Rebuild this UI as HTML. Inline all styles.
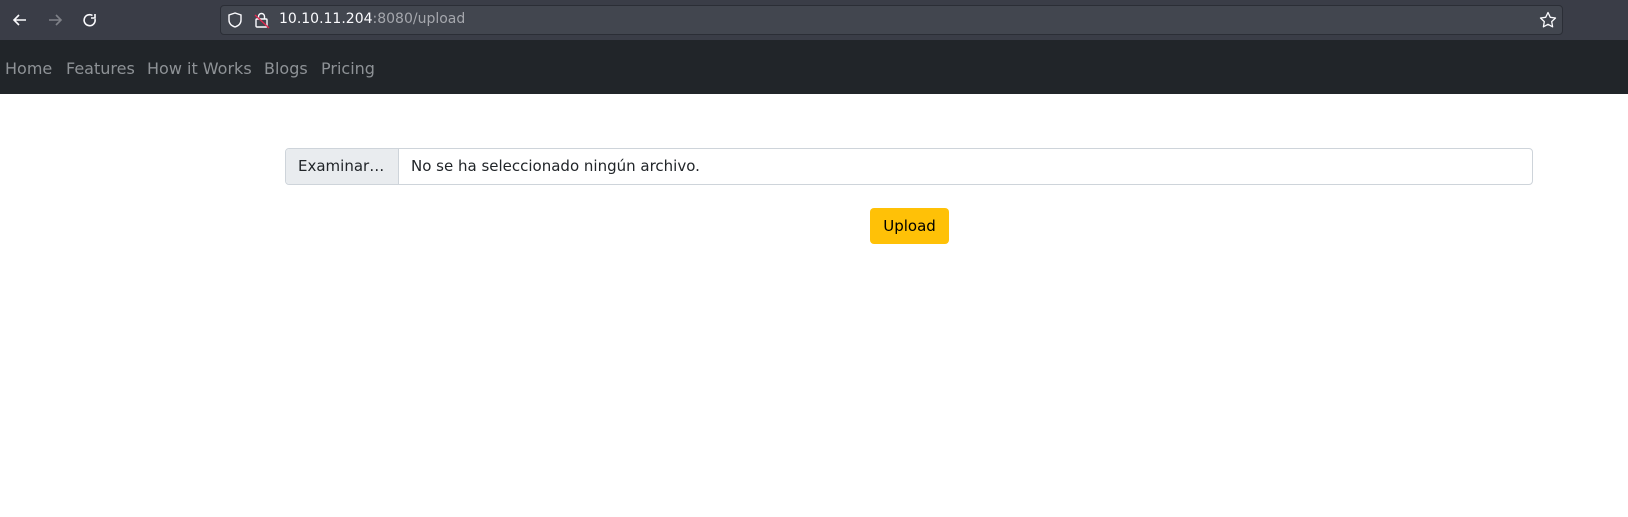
<!DOCTYPE html>
<html><head><meta charset="utf-8"><style>
*{margin:0;padding:0;box-sizing:border-box}
body{width:1628px;height:517px;background:#fff;font-family:"DejaVu Sans","Liberation Sans",sans-serif;overflow:hidden;position:relative}
.tb{position:absolute;left:0;top:0;width:1628px;height:40px;background:#3a3d47}
.url{position:absolute;left:220px;top:5px;width:1343px;height:30px;background:#42464f;border:1px solid #2b2e36;border-radius:4px}
.urltext{position:absolute;left:279px;top:11px;font-size:14px;color:#fbfbfe}
.urltext span{color:#a5a7ad}
.nav{position:absolute;left:0;top:40px;width:1628px;height:54px;background:#212529}
.nav a{position:absolute;top:19px;font-size:16px;color:#8e9296;text-decoration:none}
.file{position:absolute;left:285px;top:148px;width:1248px;height:37px;border:1px solid #ced4da;border-radius:4px;overflow:hidden}
.btnf{position:absolute;left:0;top:0;width:113px;height:35px;background:#e9ecef;border-right:1px solid #ced4da;font-size:15px;color:#212529;line-height:35px;padding-left:12px}
.ft{position:absolute;left:125px;top:0;line-height:35px;font-size:15px;color:#212529}
.up{position:absolute;left:870px;top:208px;width:79px;height:36px;background:#ffc107;border-radius:4px;font-size:15px;line-height:36px;text-align:center;color:#000}
svg{position:absolute}
</style></head><body>
<div class="tb"></div>
<svg style="left:11px;top:11px" width="18" height="18" viewBox="0 0 18 18"><path d="M15 9H3M8 4L3 9l5 5" stroke="#fbfbfe" stroke-width="1.6" fill="none"/></svg>
<svg style="left:46px;top:11px" width="18" height="18" viewBox="0 0 18 18"><path d="M3 9h12M10 4l5 5-5 5" stroke="#7f8188" stroke-width="1.6" fill="none"/></svg>
<svg style="left:81px;top:11px" width="18" height="18" viewBox="0 0 18 18"><path d="M14 8A5.5 5.5 0 1 1 11.5 4.5M14 3v4h-4" stroke="#fbfbfe" stroke-width="1.6" fill="none"/></svg>
<div class="url"></div>
<svg style="left:227px;top:11px" width="16" height="18" viewBox="0 0 16 18"><path d="M8 2L2 4v5c0 4 3 6 6 7 3-1 6-3 6-7V4z" stroke="#fbfbfe" stroke-width="1.4" fill="none"/></svg>
<svg style="left:254px;top:11px" width="16" height="18" viewBox="0 0 16 18"><rect x="2" y="8" width="11" height="8" rx="1" stroke="#fbfbfe" stroke-width="1.4" fill="none"/><path d="M4.5 8V5.5a3 3 0 0 1 6 0V8" stroke="#fbfbfe" stroke-width="1.4" fill="none"/><path d="M1 4l14 13" stroke="#e22850" stroke-width="1.4"/></svg>
<div class="urltext">10.10.11.204<span>:8080/upload</span></div>
<svg style="left:1539px;top:11px" width="18" height="18" viewBox="0 0 18 18"><path d="M9 1.5l2.3 4.8 5.2.7-3.8 3.6.9 5.2L9 13.3l-4.6 2.5.9-5.2L1.5 7l5.2-.7z" stroke="#fbfbfe" stroke-width="1.3" fill="none" stroke-linejoin="round"/></svg>
<div class="nav">
<a style="left:5px">Home</a><a style="left:66px">Features</a><a style="left:147px">How it Works</a><a style="left:264px">Blogs</a><a style="left:321px">Pricing</a>
</div>
<div class="file"><div class="btnf">Examinar…</div><div class="ft">No se ha seleccionado ningún archivo.</div></div>
<div class="up">Upload</div>
</body></html>
